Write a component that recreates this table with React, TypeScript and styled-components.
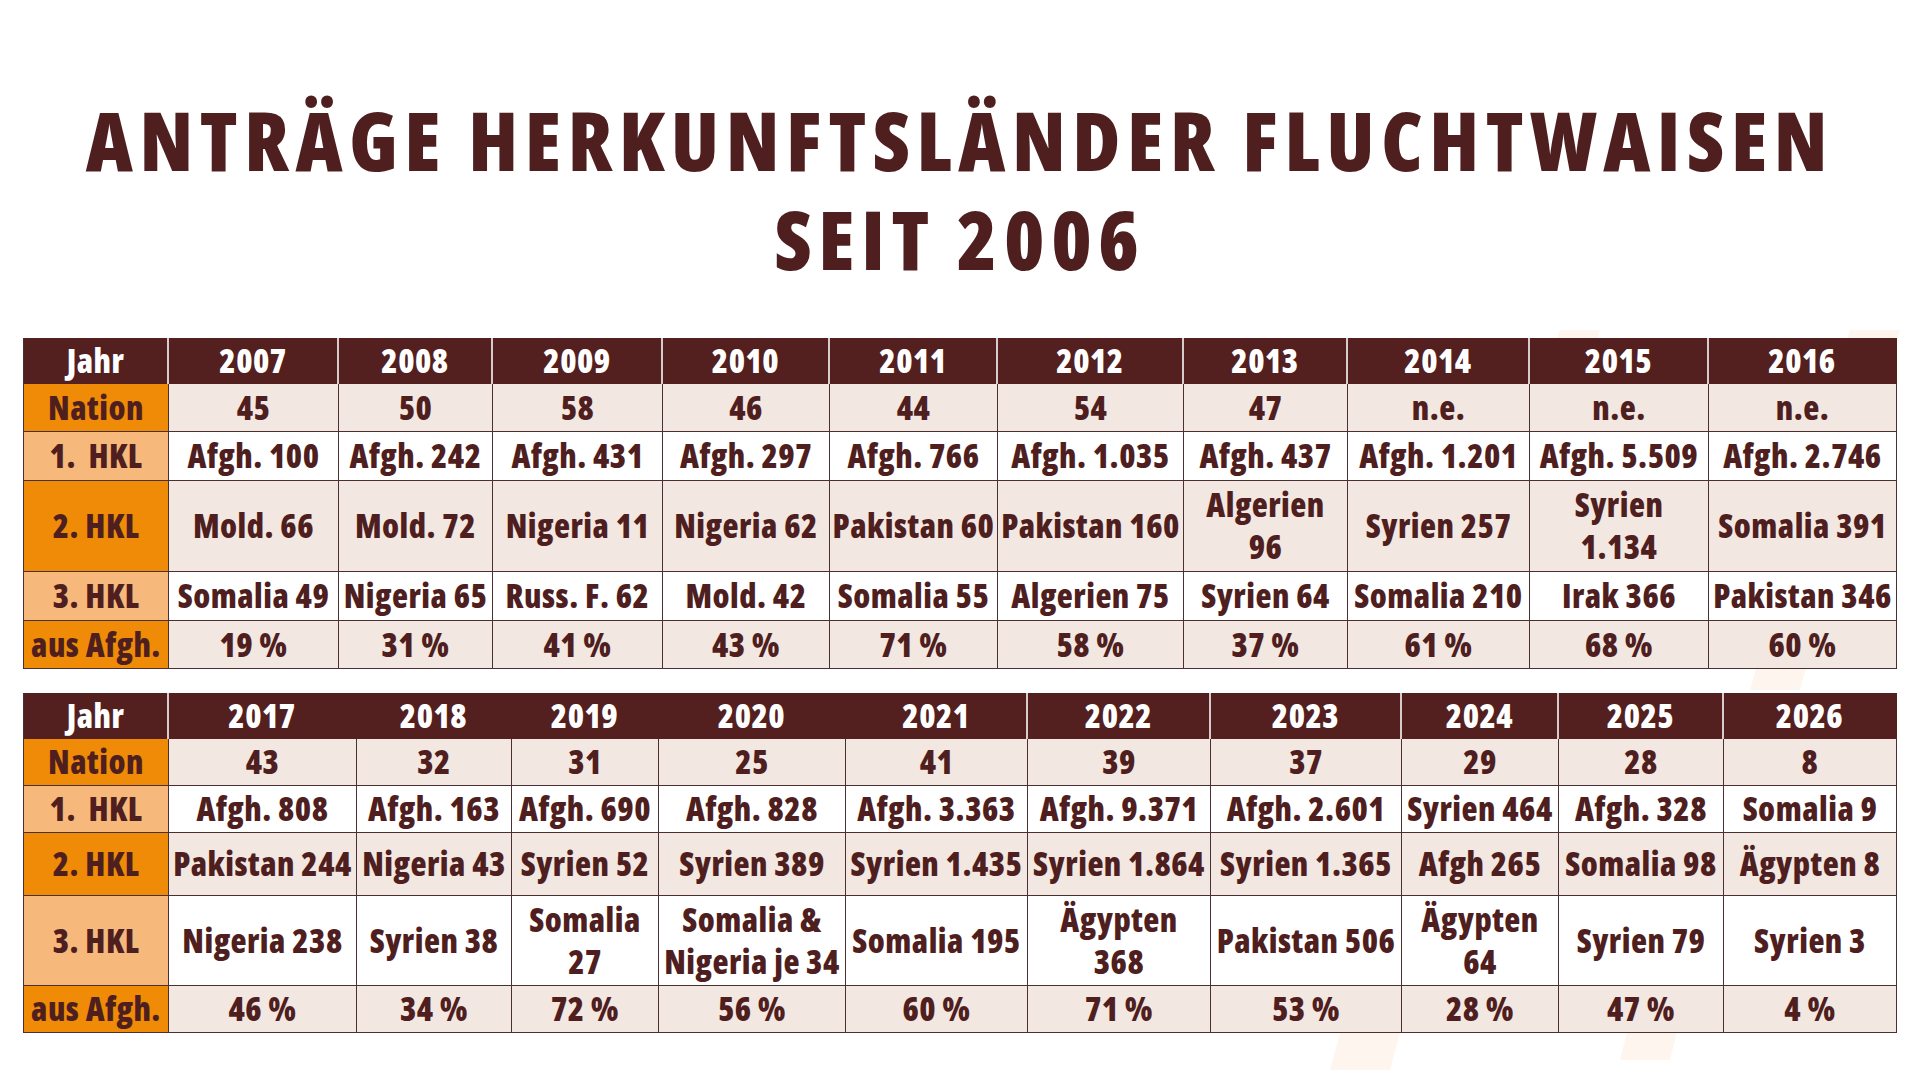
import React from "react";
import styled, { createGlobalStyle } from "styled-components";

const GlobalStyle = createGlobalStyle`
  html, body { margin: 0; padding: 0; background: #ffffff; }
  body { font-family: "Open Sans", "DejaVu Sans", sans-serif; }
`;

const C = {
  brown: "#4f1f1f",
  head: "#53201f",
  headLine: "#d6cccc",
  orange: "#ef8b06",
  light: "#f7b87b",
  beige: "#f3e7e1",
  white: "#ffffff",
  line: "#4a3030",
};

const Page = styled.div`
  position: relative;
  width: 1920px;
  height: 1080px;
  overflow: hidden;
  display: flex;
  flex-direction: column;
`;

const Watermark = styled.svg`
  position: absolute;
  left: 0;
  top: 0;
  width: 1920px;
  height: 1080px;
  z-index: 0;
  pointer-events: none;
`;

const Title = styled.h1`
  position: relative;
  z-index: 1;
  margin: 0;
  padding-top: 90px;
  display: flex;
  flex-direction: column;
  align-items: center;
  font-family: "Open Sans", "DejaVu Sans", sans-serif;
  font-stretch: 75%;
  font-weight: 800;
  font-size: 82px;
  letter-spacing: 6.6px;
  color: ${C.brown};
`;

const TitleLine = styled.span`
  display: block;
  height: 99px;
  line-height: 99px;
  white-space: nowrap;
`;

const Tables = styled.div`
  position: relative;
  z-index: 1;
  display: flex;
  flex-direction: column;
  gap: 24px;
  margin-top: 50px;
  padding-left: 23px;
`;

const Grid = styled.div<{ $cols: number[]; $rows: number[] }>`
  display: grid;
  width: 1873px;
  grid-template-columns: ${(p) => p.$cols.map((c) => `${c}px`).join(" ")};
  grid-template-rows: ${(p) => p.$rows.map((r) => `${r}px`).join(" ")};
  border-left: 1.5px solid ${C.line};
  box-sizing: border-box;
`;

const cellText = `
  box-sizing: border-box;
  display: flex;
  flex-direction: column;
  align-items: center;
  justify-content: center;
  text-align: center;
  font-family: "Open Sans", "DejaVu Sans", sans-serif;
  font-stretch: 87.5%;
  font-weight: 800;
  font-size: 33px;
  letter-spacing: 0.5px;
  line-height: 42px;
  white-space: pre;
  overflow: visible;
`;

const HeadCell = styled.div<{ $divider: boolean }>`
  ${cellText}
  background: ${C.head};
  color: #ffffff;
  border-right: 2px solid ${(p) => (p.$divider ? C.headLine : C.head)};
`;

const LabelCell = styled.div<{ $tone: "orange" | "light" }>`
  ${cellText}
  background: ${(p) => (p.$tone === "orange" ? C.orange : C.light)};
  color: ${C.brown};
  border-right: 1.5px solid ${C.line};
  border-bottom: 1.5px solid ${C.line};
`;

const DataCell = styled.div<{ $tone: "beige" | "white" }>`
  ${cellText}
  background: ${(p) => (p.$tone === "beige" ? C.beige : C.white)};
  color: ${C.brown};
  border-right: 1.5px solid ${C.line};
  border-bottom: 1.5px solid ${C.line};
`;

type Row = { label: string; tone: "orange" | "light"; bg: "beige" | "white"; values: string[] };

type TableData = {
  cols: number[];
  rows: number[];
  years: string[];
  dividers: boolean[];
  body: Row[];
};

const rowsFor = (v: string[][]): Row[] => [
  { label: "Nation", tone: "orange", bg: "beige", values: v[0] },
  { label: "1.  HKL", tone: "light", bg: "white", values: v[1] },
  { label: "2. HKL", tone: "orange", bg: "beige", values: v[2] },
  { label: "3. HKL", tone: "light", bg: "white", values: v[3] },
  { label: "aus Afgh.", tone: "orange", bg: "beige", values: v[4] },
];

const table1: TableData = {
  cols: [145, 170, 154, 170, 167, 168, 186, 164, 182, 179, 188],
  rows: [46, 48, 49, 91, 49, 48],
  years: ["2007", "2008", "2009", "2010", "2011", "2012", "2013", "2014", "2015", "2016"],
  dividers: [true, true, true, true, true, true, true, true, true, true, false],
  body: rowsFor([
    ["45", "50", "58", "46", "44", "54", "47", "n.e.", "n.e.", "n.e."],
    [
      "Afgh. 100", "Afgh. 242", "Afgh. 431", "Afgh. 297", "Afgh. 766",
      "Afgh. 1.035", "Afgh. 437", "Afgh. 1.201", "Afgh. 5.509", "Afgh. 2.746",
    ],
    [
      "Mold. 66", "Mold. 72", "Nigeria 11", "Nigeria 62", "Pakistan 60",
      "Pakistan 160", "Algerien\n96", "Syrien 257", "Syrien\n1.134", "Somalia 391",
    ],
    [
      "Somalia 49", "Nigeria 65", "Russ. F. 62", "Mold. 42", "Somalia 55",
      "Algerien 75", "Syrien 64", "Somalia 210", "Irak 366", "Pakistan 346",
    ],
    ["19 %", "31 %", "41 %", "43 %", "71 %", "58 %", "37 %", "61 %", "68 %", "60 %"],
  ]),
};

const table2: TableData = {
  cols: [145, 188, 155, 147, 187, 182, 183, 191, 157, 165, 173],
  rows: [46, 47, 47, 63, 90, 47],
  years: ["2017", "2018", "2019", "2020", "2021", "2022", "2023", "2024", "2025", "2026"],
  dividers: [true, false, false, false, false, true, true, true, true, true, false],
  body: rowsFor([
    ["43", "32", "31", "25", "41", "39", "37", "29", "28", "8"],
    [
      "Afgh. 808", "Afgh. 163", "Afgh. 690", "Afgh. 828", "Afgh. 3.363",
      "Afgh. 9.371", "Afgh. 2.601", "Syrien 464", "Afgh. 328", "Somalia 9",
    ],
    [
      "Pakistan 244", "Nigeria 43", "Syrien 52", "Syrien 389", "Syrien 1.435",
      "Syrien 1.864", "Syrien 1.365", "Afgh 265", "Somalia 98", "Ägypten 8",
    ],
    [
      "Nigeria 238", "Syrien 38", "Somalia\n27", "Somalia &\nNigeria je 34", "Somalia 195",
      "Ägypten\n368", "Pakistan 506", "Ägypten\n64", "Syrien 79", "Syrien 3",
    ],
    ["46 %", "34 %", "72 %", "56 %", "60 %", "71 %", "53 %", "28 %", "47 %", "4 %"],
  ]),
};

function DataTable({ data }: { data: TableData }) {
  return (
    <Grid $cols={data.cols} $rows={data.rows}>
      <HeadCell $divider={data.dividers[0]}>Jahr</HeadCell>
      {data.years.map((y, i) => (
        <HeadCell key={y} $divider={data.dividers[i + 1]}>
          {y}
        </HeadCell>
      ))}
      {data.body.map((row) => (
        <React.Fragment key={row.label}>
          <LabelCell $tone={row.tone}>{row.label}</LabelCell>
          {row.values.map((v, i) => (
            <DataCell key={i} $tone={row.bg}>
              {v}
            </DataCell>
          ))}
        </React.Fragment>
      ))}
    </Grid>
  );
}

export default function App() {
  return (
    <>
      <GlobalStyle />
      <Page>
        <Watermark viewBox="0 0 1920 1080">
          <g fill="#fef6ee">
            <polygon points="1850,330 1900,330 1800,690 1750,690" />
            <polygon points="1710,700 1760,700 1670,1060 1620,1060" />
            <polygon points="1430,700 1490,700 1390,1070 1330,1070" />
            <polygon points="1560,330 1600,330 1520,560 1480,560" />
          </g>
        </Watermark>
        <Title>
          <TitleLine>ANTRÄGE HERKUNFTSLÄNDER FLUCHTWAISEN</TitleLine>
          <TitleLine>SEIT 2006</TitleLine>
        </Title>
        <Tables>
          <DataTable data={table1} />
          <DataTable data={table2} />
        </Tables>
      </Page>
    </>
  );
}
